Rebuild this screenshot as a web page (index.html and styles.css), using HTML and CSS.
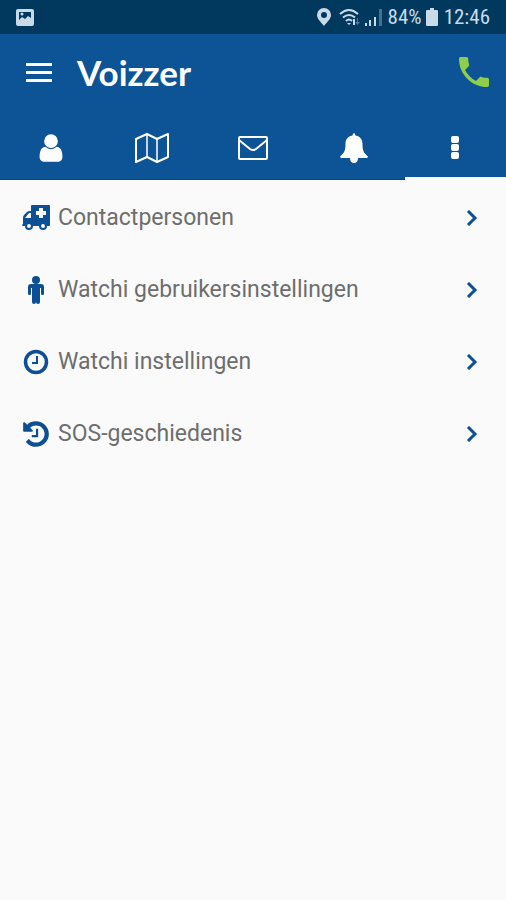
FILE: index.html
```html
<!DOCTYPE html>
<html lang="nl">
<head>
	<meta charset="UTF-8">
	<meta name="viewport" content="width=device-width,initial-scale=1.0">
	<title>Voizzer</title>
	<link rel="stylesheet" href="styles.css">
</head>
<body>
	<div class="status-bar">
		<svg class="status-picture" width="18" height="17" viewBox="0 0 18 17"><path fill="currentColor" fill-rule="evenodd" d="M2 0h14q2 0 2 2v13q0 2-2 2H2q-2 0-2-2V2q0-2 2-2zM3 3v8l3-3 3 2 3-3 3 2V3z"/><circle cx="6" cy="5" r="1.500" fill="currentColor"/></svg>
		<svg width="14" height="18" viewBox="0 0 14 18"><path fill="currentColor" fill-rule="evenodd" d="M7 0a7 7 0 0 1 7 7c0 4-4 7-7 11C4 14 0 11 0 7a7 7 0 0 1 7-7zm0 4a3 3 0 1 0 0 6 3 3 0 0 0 0-6z"/></svg>
		<svg class="status-wifi" width="22" height="18" viewBox="0 0 22 18"><g fill="none" stroke="currentColor" stroke-width="2"><path d="M1 6Q10-2 19 6M4 9.500q6-5 12 0M7 13q3-3 6 0"/></g><path fill="currentColor" d="M8 15h4l-2 2zM14 11h2v6h-2z"/><path fill="currentColor" opacity=".4" d="M18 10h1v4h2l-2.500 3-2.500-3h2z"/></svg>
		<svg class="status-signal" width="17" height="17" viewBox="0 0 17 17"><path fill="currentColor" d="M0 14h2v3H0zM4 11h2v6H4zM9 8h2v9H9z"/><path fill="currentColor" opacity=".35" d="M14 0h3v17h-3z"/></svg>
		<span class="status-text">84%</span>
		<svg class="status-battery" width="12" height="18" viewBox="0 0 12 18"><path fill="currentColor" d="M4 0h4v2h3q1 0 1 1v14q0 1-1 1H1q-1 0-1-1V3q0-1 1-1h3z"/></svg>
		<span class="status-text">12:46</span>
	</div>
	<header class="header">
		<div class="toolbar">
			<button type="button" class="icon-btn" aria-label="Menu">
				<svg width="26" height="20" viewBox="0 0 26 20"><path fill="currentColor" d="M0 1h26v3H0zM0 9h26v3H0zM0 17h26v3H0z"/></svg>
			</button>
			<h1 class="title">Voizzer</h1>
			<button type="button" class="icon-btn call-btn" aria-label="Bellen">
				<svg width="40" height="40" viewBox="0 0 24 24"><path fill="currentColor" d="M6.620 10.790c1.440 2.830 3.760 5.140 6.590 6.590l2.200-2.200c.27-.27.67-.36 1.020-.24 1.120.37 2.330.57 3.570.57.55 0 1 .45 1 1V20c0 .55-.45 1-1 1-9.390 0-17-7.610-17-17 0-.55.45-1 1-1h3.500c.55 0 1 .45 1 1 0 1.250.2 2.450.57 3.570.11.35.03.74-.25 1.020l-2.200 2.200z"/></svg>
			</button>
		</div>
		<nav class="tabs">
			<a href="#" class="tab" aria-label="Profiel">
				<svg width="32" height="32" viewBox="0 0 1792 1792"><path fill="currentColor" d="M1536 1399q0 109-62.500 187t-150.500 78h-854q-88 0-150.500-78t-62.500-187q0-85 8.500-160.500t31.500-152 58.500-131 94-89 134.500-34.500q131 128 313 128t313-128q76 0 134.500 34.500t94 89 58.500 131 31.500 152 8.500 160.500zm-256-887q0 159-112.500 271.500t-271.500 112.500-271.500-112.500-112.500-271.500 112.500-271.500 271.500-112.500 271.500 112.500 112.500 271.500z"/></svg>
			</a>
			<a href="#" class="tab" aria-label="Kaart">
				<svg width="34" height="30" viewBox="0 0 34 30"><g fill="none" stroke="currentColor" stroke-linejoin="round"><path stroke-width="2" d="M1 6l11-5 10 5 11-5v23l-11 5-10-5-11 5z"/><path stroke-width="1.500" d="M12 1v23M22 6v23"/></g></svg>
			</a>
			<a href="#" class="tab" aria-label="Berichten">
				<svg width="30" height="24" viewBox="0 0 30 24"><g fill="none" stroke="currentColor" stroke-width="2" stroke-linejoin="round"><rect x="1" y="1" width="28" height="22" rx="1"/><path d="M1 4l11 9q3 2 6 0l11-9"/></g></svg>
			</a>
			<a href="#" class="tab" aria-label="Meldingen">
				<svg width="28" height="30" viewBox="0 0 28 30"><path fill="currentColor" d="M14 0q1 0 1.500 2.500c5 1 7 4 7 8.500 0 7 1.500 9 5 12q1 2-1 2H18q0 5-4 5t-4-5H1.500q-2 0-1-2c3.500-3 5-5 5-12 0-4.500 2-7.500 7-8.500Q13 0 14 0z"/></svg>
			</a>
			<a href="#" class="tab tab-active" aria-label="Meer">
				<svg width="8" height="24" viewBox="0 0 8 24"><g fill="currentColor"><rect width="8" height="7" rx="2"/><rect y="8" width="8" height="7" rx="2"/><rect y="16" width="8" height="7" rx="2"/></g></svg>
			</a>
		</nav>
	</header>
	<main class="list">
		<a href="#" class="list-item">
			<svg class="list-icon" width="28" height="26" viewBox="0 0 28 26"><path fill="currentColor" fill-rule="evenodd" d="M10 0h17q1 0 1 1v19q0 1-1 1h-2a4 4 0 0 1-8 0h-6a4 4 0 0 1-8 0H1q-1 0-1-1l1-1v-6q0-2 1-3l3-3q1-1 3-1h1V1q0-1 1-1zM3 13h6V8H7zM17 3v3h-3v4h3v3h4v-3h3V6h-3V3zM7 19a2 2 0 1 0 0 4 2 2 0 0 0 0-4zm14 0a2 2 0 1 0 0 4 2 2 0 0 0 0-4z"/></svg>
			<span class="list-text">Contactpersonen</span>
			<svg class="chevron" width="12" height="16" viewBox="0 0 12 16"><path d="M2 1l7 7-7 7"/></svg>
		</a>
		<a href="#" class="list-item">
			<svg class="list-icon" width="28" height="28" viewBox="0 0 28 28"><g fill="currentColor"><circle cx="14" cy="4" r="4"/><path d="M9 8h10q3 0 3 3v7q0 1-1.500 1T19 18v-6h-1v14q0 2-2 2t-2-2v-8 8q0 2-2 2t-2-2V12H9v6q0 1-1.500 1T6 18v-7q0-3 3-3z"/><path d="M13 17h2v3h-2z"/></g></svg>
			<span class="list-text">Watchi gebruikersinstellingen</span>
			<svg class="chevron" width="12" height="16" viewBox="0 0 12 16"><path d="M2 1l7 7-7 7"/></svg>
		</a>
		<a href="#" class="list-item">
			<svg class="list-icon" width="28" height="28" viewBox="0 0 28 28"><g fill="none" stroke="currentColor"><circle cx="14" cy="14" r="10.500" stroke-width="3.500"/><path stroke-width="2" d="M15 8v7h-5"/></g></svg>
			<span class="list-text">Watchi instellingen</span>
			<svg class="chevron" width="12" height="16" viewBox="0 0 12 16"><path d="M2 1l7 7-7 7"/></svg>
		</a>
		<a href="#" class="list-item">
			<svg class="list-icon" width="28" height="28" viewBox="60 60 1672 1672"><path fill="currentColor" d="M1664 896q0 156-61 298t-164 245-245 164-298 61q-172 0-327-72.500t-264-204.500q-7-10-6.500-22.500t8.500-20.500l137-138q10-9 25-9 16 2 23 12 73 95 179 147t225 52q104 0 198.500-40.500t163.500-109.500 109.500-163.500 40.500-198.500-40.500-198.500-109.500-163.500-163.500-109.500-198.500-40.500q-98 0-188 35.500t-160 101.500l137 138q31 30 14 69-17 40-59 40h-448q-26 0-45-19t-19-45v-448q0-42 40-59 39-17 69 14l130 129q107-101 244.500-156.500t284.500-55.500q156 0 298 61t245 164 164 245 61 298zm-640-288v448q0 14-9 23t-23 9h-320q-14 0-23-9t-9-23v-64q0-14 9-23t23-9h224v-352q0-14 9-23t23-9h64q14 0 23 9t9 23z"/></svg>
			<span class="list-text">SOS-geschiedenis</span>
			<svg class="chevron" width="12" height="16" viewBox="0 0 12 16"><path d="M2 1l7 7-7 7"/></svg>
		</a>
	</main>
</body>
</html>
```
FILE: styles.css
```css
*{
	margin:0;padding:0;box-sizing:border-box;
}
body{
	background-color:#fafafa;
	font-family:Roboto,"Liberation Sans",sans-serif;
}
a{
	text-decoration:none;
}
svg{
	display:block;flex:none;
}
.status-bar{
	display:flex;align-items:center;height:34px;padding:0 16px;
	background-color:#00395d;color:#c9dbe9;
}
.status-picture{
	margin-right:auto;
}
.status-wifi{
	margin-left:8px;
}
.status-signal{
	margin:0 6px 0 4px;
}
.status-battery{
	margin:0 6px 0 4px;
}
.status-text{
	font-family:"Roboto Condensed",Roboto,sans-serif;
	font-size:21px;line-height:24px;
}
.header{
	background-color:#0d5497;color:#fff;
}
.toolbar{
	display:flex;align-items:center;height:76px;padding:0 12px 0 26px;
}
.icon-btn{
	border:0;background:none;color:inherit;cursor:pointer;
}
.title{
	margin-left:25px;font-family:Lato,sans-serif;font-size:35px;line-height:40px;font-weight:700;
}
.call-btn{
	margin-left:auto;color:#8fce4a;
}
.tabs{
	display:flex;height:70px;border-bottom:1px solid #0a3f95;
}
.tab{
	display:flex;flex:1;align-items:center;justify-content:center;
	padding-top:6px;color:#fff;
}
.tab-active{
	margin-bottom:-1px;padding-top:9px;border-bottom:3px solid #fafafa;
}
.list{
	padding-top:2px;
}
.list-item{
	display:flex;align-items:center;height:72px;padding:0 28px 0 22px;
	color:#0d4f95;
}
.list-text{
	flex:1;margin-left:8px;
	font-size:23px;line-height:28px;color:#6e6e6e;
}
.chevron path{
	fill:none;stroke:currentColor;stroke-width:3;
}
```
